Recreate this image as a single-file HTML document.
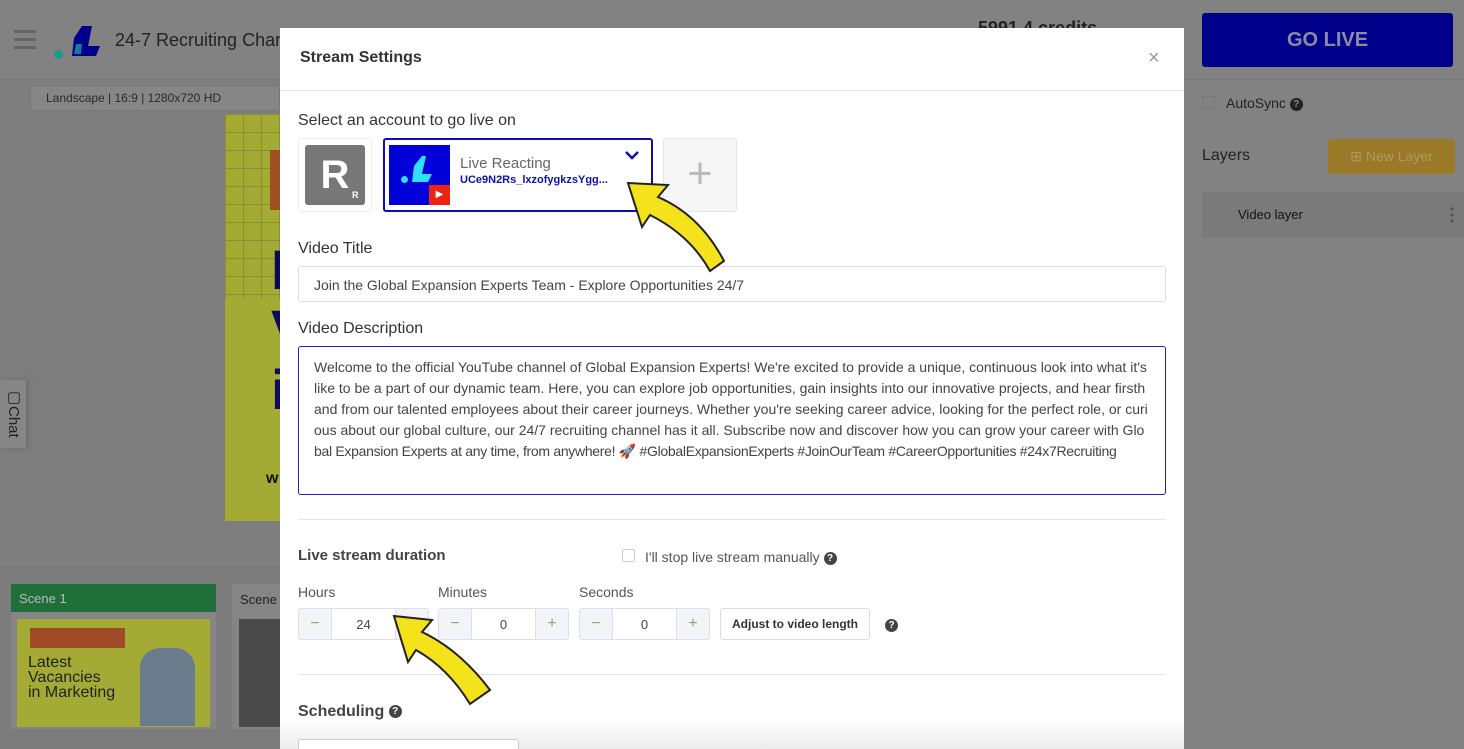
<!DOCTYPE html>
<html><head><meta charset="utf-8"><style>
*{box-sizing:border-box;margin:0;padding:0}
html,body{width:1464px;height:749px;overflow:hidden}
body{background:#7e7e7e;font-family:"Liberation Sans",sans-serif;position:relative}
.abs{position:absolute}
.modal{position:absolute;left:280px;top:28px;width:904px;height:721px;background:#fff;overflow:hidden}
.lbl{position:absolute;left:18px;font-size:16px;color:#333}
.inp{position:absolute;border:1px solid #ddd;border-radius:3px;background:#fff}
.sp{position:absolute;top:580px;height:32px;border:1px solid #dde;border-radius:3px;display:flex;font-size:13px;color:#444}
.sp div{display:flex;align-items:center;justify-content:center}
.sp .b{width:32px;background:#f3f4f8;color:#999;font-size:16px}
.sp .m{width:65px;border-left:1px solid #dde;border-right:1px solid #dde}
.q{display:inline-block;width:13px;height:13px;border-radius:50%;background:#444;color:#fff;font-size:10px;text-align:center;line-height:13px;font-weight:bold;vertical-align:middle}
</style></head><body>
<div class="abs" style="left:0;top:0;width:1464px;height:80px;background:#828282;border-bottom:1px solid #777"></div>
<div class="abs" style="left:14px;top:30px;width:22px;height:3px;background:#666;box-shadow:0 8px 0 #666,0 16px 0 #666"></div>
<div class="abs" style="left:54px;top:50px;width:9px;height:9px;border-radius:50%;background:#1a9a8a"></div>
<svg class="abs" style="left:64px;top:16px" width="40" height="44"><path d="M10 22 L18 10 L28 10 L24 30 L36 30 L32 40 L8 40 Z" fill="#00008a"/><path d="M12 28 L18 28 L17 38 L10 38Z" fill="#167a9a"/></svg>
<div class="abs" style="left:115px;top:30px;font-size:18px;color:#222">24-7 Recruiting Chan</div>
<div class="abs" style="left:978px;top:18px;font-size:18px;color:#222;font-weight:bold">5991.4 credits</div>
<div class="abs" style="left:30px;top:85px;width:250px;height:26px;border:1px solid #777;border-radius:3px;background:#868686;font-size:12px;color:#2a2a2a;padding:5px 15px">Landscape | 16:9 | 1280x720 HD</div>
<div class="abs" style="left:225px;top:114px;width:55px;height:185px;background:#a3ab34;background-image:linear-gradient(#8a8e30 1px,transparent 1px),linear-gradient(90deg,#8a8e30 1px,transparent 1px);background-size:18px 18px"></div>
<div class="abs" style="left:225px;top:299px;width:55px;height:222px;background:#a3ab34"></div>
<div class="abs" style="left:270px;top:150px;width:10px;height:60px;background:#a05020"></div>
<div class="abs" style="left:271px;top:240px;font-size:56px;color:#0a0a60;font-weight:bold;line-height:60px">I<br>V<br>i</div>
<div class="abs" style="left:266px;top:470px;font-size:16px;color:#111;font-weight:bold">w</div>
<div class="abs" style="left:0;top:380px;width:26px;height:68px;background:#868686;box-shadow:2px 0 6px #6a6a6a"></div>
<div class="abs" style="left:4px;top:388px;font-size:15px;color:#222;writing-mode:vertical-rl">▢Chat</div>
<div class="abs" style="left:0;top:567px;width:280px;height:182px;background:#7c7c7c;border-top:1px solid #777"></div>
<div class="abs" style="left:11px;top:584px;width:205px;height:145px;background:#858585"></div>
<div class="abs" style="left:11px;top:584px;width:205px;height:28px;background:#1f6f3b;color:#bbb;font-size:13px;padding:7px 8px">Scene 1</div>
<div class="abs" style="left:17px;top:619px;width:193px;height:108px;background:#a3ab34"></div>
<div class="abs" style="left:30px;top:628px;width:95px;height:20px;background:#a04a28"></div>
<div class="abs" style="left:28px;top:655px;font-size:16px;color:#222;line-height:15px">Latest<br>Vacancies<br>in Marketing</div>
<div class="abs" style="left:140px;top:648px;width:55px;height:78px;background:#6b7b8e;border-radius:20px 20px 0 0"></div>
<div class="abs" style="left:232px;top:584px;width:48px;height:145px;background:#858585"></div>
<div class="abs" style="left:240px;top:592px;font-size:13px;color:#222">Scene</div>
<div class="abs" style="left:239px;top:619px;width:41px;height:108px;background:#4a4a4a"></div>
<div class="abs" style="left:1184px;top:80px;width:280px;height:669px;background:#828282"></div>
<div class="abs" style="left:1202px;top:13px;width:251px;height:54px;background:#00008a;border-radius:3px;color:#8a8aa8;font-weight:bold;font-size:20px;text-align:center;line-height:54px">GO LIVE</div>
<div class="abs" style="left:1202px;top:96px;width:13px;height:13px;border:1px solid #777"></div>
<div class="abs" style="left:1226px;top:95px;font-size:14px;color:#222">AutoSync <span class="q" style="background:#222;color:#888">?</span></div>
<div class="abs" style="left:1202px;top:147px;font-size:16px;color:#222">Layers</div>
<div class="abs" style="left:1328px;top:139px;width:127px;height:35px;background:#9a7a28;border-radius:3px;color:#b09a60;font-size:14px;text-align:center;line-height:35px">⊞ New Layer</div>
<div class="abs" style="left:1202px;top:192px;width:262px;height:46px;background:#7a7a7a"></div>
<div class="abs" style="left:1238px;top:207px;font-size:13px;color:#111">Video layer</div>
<div class="abs" style="left:1450px;top:206px;color:#555;font-size:12px;line-height:6px">•<br>•<br>•</div>
<div class="modal">
<div class="abs" style="left:0;top:0;width:904px;height:63px;border-bottom:1px solid #e5e5e5"></div>
<div class="abs" style="left:20px;top:21px;font-size:16px;color:#333;font-weight:bold">Stream Settings</div>
<div class="abs" style="left:868px;top:19px;font-size:20px;color:#999">×</div>
<div class="lbl" style="top:84px">Select an account to go live on</div>
<div class="abs" style="left:18px;top:110px;width:74px;height:74px;border:1px solid #eee;border-radius:3px"></div>
<div class="abs" style="left:25px;top:117px;width:60px;height:60px;background:#777;border-radius:3px;color:#fff;font-weight:bold;font-size:40px;text-align:center;line-height:60px">R</div>
<div class="abs" style="left:72px;top:162px;color:#fff;font-size:9px;font-weight:bold">R</div>
<div class="abs" style="left:103px;top:110px;width:270px;height:74px;border:2px solid #0f0fa8;border-radius:3px"></div>
<div class="abs" style="left:109px;top:117px;width:61px;height:60px;background:#0000d8"></div>
<div class="abs" style="left:121px;top:148px;width:7px;height:7px;border-radius:50%;background:#2ee0ff"></div>
<svg class="abs" style="left:128px;top:124px" width="30" height="36"><path d="M6 14 L14 4 L18 4 L14 22 L24 22 L20 30 L4 30 Z" fill="#2ee0ff"/></svg>
<div class="abs" style="left:149px;top:157px;width:21px;height:20px;background:#e21;color:#fff;font-size:10px;text-align:center;line-height:20px">▶</div>
<div class="abs" style="left:180px;top:127px;font-size:15px;color:#666">Live Reacting</div>
<div class="abs" style="left:180px;top:146px;font-size:11px;color:#1010b0;font-weight:bold">UCe9N2Rs_lxzofygkzsYgg...</div>
<svg class="abs" style="left:344px;top:121px" width="16" height="12"><path d="M2 3 L8 9 L14 3" stroke="#1010a0" stroke-width="2.5" fill="none"/></svg>
<div class="abs" style="left:383px;top:110px;width:74px;height:74px;border:1px solid #e5e5e5;border-radius:3px;background:#f6f6f6;color:#bbb;font-size:44px;text-align:center;line-height:70px;font-weight:200">+</div>
<div class="lbl" style="top:212px">Video Title</div>
<div class="inp" style="left:18px;top:238px;width:868px;height:36px;font-size:14px;color:#444;padding:10px 15px">Join the Global Expansion Experts Team - Explore Opportunities 24/7</div>
<div class="lbl" style="top:292px">Video Description</div>
<div class="inp" style="left:18px;top:318px;width:868px;height:149px;border:1px solid #2222aa;font-size:14px;color:#444;padding:10px 5px 10px 15px;line-height:21px;white-space:nowrap;overflow:hidden">Welcome to the official YouTube channel of Global Expansion Experts! We're excited to provide a unique, continuous look into what it's<br>like to be a part of our dynamic team. Here, you can explore job opportunities, gain insights into our innovative projects, and hear firsth<br>and from our talented employees about their career journeys. Whether you're seeking career advice, looking for the perfect role, or curi<br>ous about our global culture, our 24/7 recruiting channel has it all. Subscribe now and discover how you can grow your career with Glo<br><span style="letter-spacing:-0.3px">bal Expansion Experts at any time, from anywhere! 🚀 #GlobalExpansionExperts #JoinOurTeam #CareerOpportunities #24x7Recruiting</span></div>
<div class="abs" style="left:18px;top:491px;width:868px;height:1px;background:#e5e5e5"></div>
<div class="lbl" style="top:519px;font-size:15px;font-weight:bold;color:#444">Live stream duration</div>
<div class="abs" style="left:342px;top:521px;width:13px;height:13px;border:1px solid #ccc;border-radius:2px"></div>
<div class="abs" style="left:365px;top:521px;font-size:14px;color:#555">I'll stop live stream manually <span class="q">?</span></div>
<div class="lbl" style="top:556px;font-size:14px;color:#555">Hours</div>
<div class="lbl" style="top:556px;left:158px;font-size:14px;color:#555">Minutes</div>
<div class="lbl" style="top:556px;left:299px;font-size:14px;color:#555">Seconds</div>
<div class="sp" style="left:18px"><div class="b">−</div><div class="m">24</div><div class="b"></div></div>
<div class="sp" style="left:158px"><div class="b">−</div><div class="m">0</div><div class="b">+</div></div>
<div class="sp" style="left:299px"><div class="b">−</div><div class="m">0</div><div class="b">+</div></div>
<div class="abs" style="left:440px;top:580px;width:150px;height:32px;border:1px solid #ddd;border-radius:3px;font-size:12px;color:#333;text-align:center;line-height:30px;font-weight:bold">Adjust to video length</div>
<div class="abs" style="left:605px;top:589px"><span class="q">?</span></div>
<div class="abs" style="left:18px;top:646px;width:868px;height:1px;background:#e5e5e5"></div>
<div class="lbl" style="top:675px;font-weight:bold;color:#444">Scheduling <span class="q">?</span></div>
<div class="abs" style="left:0;top:690px;width:904px;height:31px;background:linear-gradient(rgba(255,255,255,0),#ececec)"></div>
<div class="abs" style="left:18px;top:711px;width:221px;height:20px;border:1px solid #ccc;border-radius:3px;background:#fff"></div>
</div>
<svg class="abs" style="left:620px;top:175px" width="110" height="100"><path d="M8 8 L48 10 L38 22 Q80 40 104 86 L90 96 Q70 60 30 40 L22 52 Z" fill="#f4e21a" stroke="#222" stroke-width="2"/></svg>
<svg class="abs" style="left:390px;top:610px" width="110" height="100"><path d="M4 6 L42 10 L32 22 Q70 40 100 80 L80 94 Q58 58 26 40 L18 52 Z" fill="#f4e21a" stroke="#222" stroke-width="2"/></svg>
</body></html>
